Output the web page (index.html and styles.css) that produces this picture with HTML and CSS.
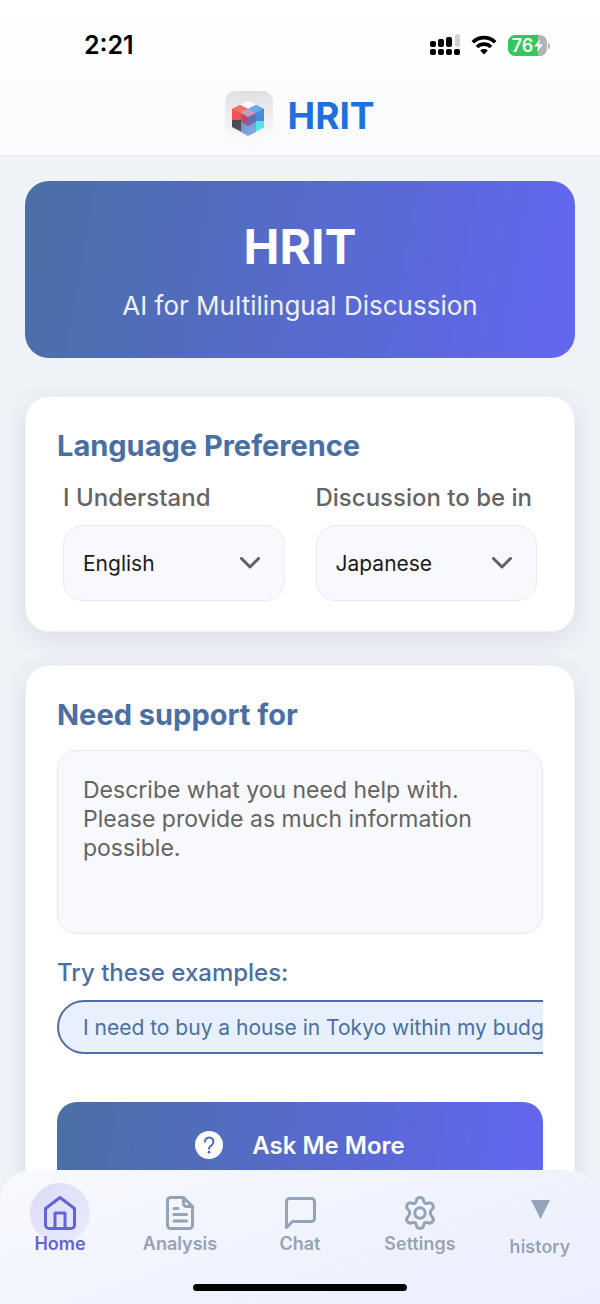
FILE: index.html
```html
<!DOCTYPE html>
<html lang="en">
<head>
<meta charset="utf-8">
<meta name="viewport" content="width=device-width, initial-scale=1">
<title>HRIT</title>
<link rel="stylesheet" href="styles.css">
</head>
<body>
<div class="app">
  <header class="header">
    <div class="status">
      <span class="time">2:21</span>
      <div class="indicators">
        <svg class="signal" width="30" height="22" viewBox="0 0 30 22" aria-hidden="true">
          <rect x="0" y="7" width="6" height="6" rx="2"/>
          <rect x="8" y="5" width="6" height="8" rx="2"/>
          <rect x="16" y="3" width="6" height="10" rx="2"/>
          <rect x="25" y="0" width="5" height="13" rx="2" fill="#d2d2d2"/>
          <rect x="0" y="15" width="6" height="6" rx="2"/>
          <rect x="8" y="15" width="6" height="6" rx="2"/>
          <rect x="16" y="15" width="6" height="6" rx="2"/>
          <rect x="24" y="15" width="6" height="6" rx="2"/>
        </svg>
        <svg class="wifi" width="26" height="20" viewBox="0 0 26 20" aria-hidden="true">
          <path d="M1.800 7.200a16 16 0 0 1 22.400 0M6 12a10 10 0 0 1 14 0" fill="none" stroke="#000" stroke-width="3.600"/>
          <path d="M9.200 15.600a5.600 5.600 0 0 1 7.600 0L13 19.600z"/>
        </svg>
        <div class="battery">
          <span class="level">76</span>
          <svg width="9" height="13" viewBox="0 0 9 13" aria-hidden="true"><path d="M6 0L0 7.500h4L3 13l6-7.500H5z" fill="#fff"/></svg>
        </div>
      </div>
    </div>
    <div class="brand">
      <svg class="logo" width="48" height="48" viewBox="0 0 48 48" aria-hidden="true">
        <defs>
          <linearGradient id="tile" x1="0" y1="0" x2="0" y2="1"><stop offset="0" stop-color="#e0e0e2"/><stop offset="0.600" stop-color="#f0f0f2"/><stop offset="1" stop-color="#fafbfc"/></linearGradient>
          <linearGradient id="base" x1="0" y1="0" x2="1" y2="1"><stop offset="0" stop-color="#6f8fce"/><stop offset="1" stop-color="#86b3ea"/></linearGradient>
        </defs>
        <rect width="48" height="48" rx="11" fill="url(#tile)"/>
        <path d="M5 37l18 8 18-8-6-4H12z" fill="#e4e5e8"/>
        <path d="M15 14l8-4 9 4-9 6z" fill="#fff"/>
        <path d="M7 18l8-4 8 4-6 3v9H7z" fill="#ed5357"/>
        <path d="M7 18l8-4 8 4-7 4z" fill="#f0726f"/>
        <path d="M7 29h10v12l-10-5z" fill="#4b4c53"/>
        <path d="M23 18l8-4 8 4v12H29z" fill="#438bdd"/>
        <path d="M23 18l8-4 8 4-8 4z" fill="#66aae9"/>
        <path d="M30 30h9v6l-9 5z" fill="#58dfe9"/>
        <path d="M16 30l7 4 8-4v11l-8 4-7-4z" fill="url(#base)"/>
        <path d="M16 22l7 3v10l-7-4z" fill="#b84b68"/>
        <path d="M23 25l8-3v9l-8 4z" fill="#6a6db4"/>
        <path d="M16 22l7-4 8 4-8 4z" fill="#c99fb4"/>
      </svg>
      <span class="brand-name">HRIT</span>
    </div>
  </header>

  <main class="content">
    <section class="hero">
      <h1>HRIT</h1>
      <p>AI for Multilingual Discussion</p>
    </section>

    <section class="card">
      <h2>Language Preference</h2>
      <div class="languages">
        <div class="field">
          <label for="understand">I Understand</label>
          <div class="select">
            <select id="understand"><option>English</option><option>Japanese</option></select>
            <svg class="chevron" width="20" height="12" viewBox="0 0 20 12" aria-hidden="true"><path d="M1.500 1.500L10 10l8.500-8.500"/></svg>
          </div>
        </div>
        <div class="field">
          <label for="discussion">Discussion to be in</label>
          <div class="select">
            <select id="discussion"><option>Japanese</option><option>English</option></select>
            <svg class="chevron" width="20" height="12" viewBox="0 0 20 12" aria-hidden="true"><path d="M1.500 1.500L10 10l8.500-8.500"/></svg>
          </div>
        </div>
      </div>
    </section>

    <section class="card">
      <h2><label for="support">Need support for</label></h2>
      <textarea id="support" class="support" placeholder="Describe what you need help with. Please provide as much information possible."></textarea>
      <h3>Try these examples:</h3>
      <div class="examples">
        <button class="chip" type="button">I need to buy a house in Tokyo within my budget</button>
      </div>
      <button class="ask" type="button">
        <svg width="28" height="28" viewBox="0 0 28 28" aria-hidden="true">
          <circle cx="14" cy="14" r="14" fill="#fff"/>
          <path d="M9.800 10.800a4.300 4.300 0 1 1 6.600 3.600c-1.600 1-2.400 1.600-2.400 3.400" fill="none" stroke="#4f6db4" stroke-width="2" stroke-linecap="round"/>
          <circle cx="14" cy="21.200" r="1.400" fill="#4f6db4"/>
        </svg>
        <span>Ask Me More</span>
      </button>
    </section>
  </main>

  <nav class="tabs">
    <div class="tab-row">
      <a class="tab active" href="#home">
        <span class="tab-icon"><svg width="32" height="34" viewBox="0 0 32 34" aria-hidden="true"><path d="M1.500 12.500L16 1.500l14.500 11V29a3.500 3.500 0 0 1-3.500 3.500H5A3.500 3.500 0 0 1 1.500 29zM11 32V17h10v15"/></svg></span>
        <span>Home</span>
      </a>
      <a class="tab" href="#analysis">
        <span class="tab-icon"><svg width="28" height="34" viewBox="0 0 28 34" aria-hidden="true"><path d="M17.500 1.500H4.500a3 3 0 0 0-3 3v25a3 3 0 0 0 3 3h19a3 3 0 0 0 3-3V10.500zM17.500 1.500v6a3 3 0 0 0 3 3h6M8 12.500h4M8 18.500h12.500M8 25h12.500"/></svg></span>
        <span>Analysis</span>
      </a>
      <a class="tab" href="#chat">
        <span class="tab-icon"><svg width="31" height="32" viewBox="0 0 31 32" aria-hidden="true"><path d="M1.500 30.500V4.500a3 3 0 0 1 3-3h22a3 3 0 0 1 3 3v17a3 3 0 0 1-3 3h-19z"/></svg></span>
        <span>Chat</span>
      </a>
      <a class="tab" href="#settings">
        <span class="tab-icon"><svg width="32" height="34" viewBox="0 0 32 34" aria-hidden="true"><path d="M16 1.500c2.200 0 3.500 1.500 3.800 3.600.3 2.200 1.800 3 3.800 2.200 2-.8 4-.6 5.200 1.400 1.100 1.900.5 3.800-1.200 5.200-1.700 1.400-1.700 4.800 0 6.200 1.700 1.400 2.300 3.300 1.200 5.200-1.200 2-3.200 2.200-5.200 1.400-2-.8-3.500 0-3.800 2.200-.3 2.100-1.600 3.600-3.800 3.600s-3.500-1.500-3.800-3.600c-.3-2.200-1.800-3-3.800-2.200-2 .8-4 .6-5.200-1.400-1.100-1.900-.5-3.800 1.200-5.200 1.700-1.400 1.700-4.800 0-6.200C2.700 12.500 2.100 10.600 3.200 8.700c1.200-2 3.200-2.200 5.200-1.400 2 .8 3.500 0 3.800-2.200.3-2.100 1.600-3.600 3.800-3.600z"/><circle cx="16" cy="17" r="5.200"/></svg></span>
        <span>Settings</span>
      </a>
      <a class="tab history" href="#history">
        <span class="tab-icon"><svg width="19" height="19" viewBox="0 0 19 19" aria-hidden="true"><path d="M0 0h19L9.500 19z"/></svg></span>
        <span>history</span>
      </a>
    </div>
    <div class="home-indicator"></div>
  </nav>
</div>
</body>
</html>
```

FILE: styles.css
```css
* { box-sizing: border-box; }

body {
  margin: 0;
  font-family: Inter, "Liberation Sans", sans-serif;
  color: #1c1c1e;
}

h1, h2, h3, p { margin: 0; }

button, select, textarea { font: inherit; margin: 0; }

.app {
  height: 100vh;
  display: flex;
  flex-direction: column;
  background: #eff3f8;
}

.header {
  flex: none;
  background: linear-gradient(#ffffff, #f8fafc);
  border-bottom: 1px solid #e8ecf1;
}

.status {
  display: flex;
  justify-content: space-between;
  align-items: center;
  height: 90px;
  padding: 0 50px 0 84px;
}

.time { font-size: 25px; font-weight: 600; color: #000; }

.indicators { display: flex; align-items: center; gap: 11px; }

.battery {
  position: relative;
  display: flex;
  align-items: center;
  justify-content: center;
  gap: 1px;
  width: 39px;
  height: 21px;
  margin-right: 3px;
  border-radius: 7px;
  background: linear-gradient(90deg, #35c759 76%, #b3b3b5 76%);
}

.battery::after {
  content: "";
  position: absolute;
  right: -3px;
  top: 8px;
  width: 2px;
  height: 6px;
  border-radius: 0 2px 2px 0;
  background: #b3b3b5;
}

.level { font-size: 18px; line-height: 21px; font-weight: 600; color: #fff; }

.brand {
  display: flex;
  justify-content: center;
  align-items: center;
  gap: 14px;
  height: 65px;
  padding-bottom: 15px;
}

.brand-name { font-size: 37px; font-weight: 700; color: #1f6fde; }

.content {
  flex: 1;
  min-height: 0;
  overflow-y: auto;
  scrollbar-width: none;
  padding: 25px 25px 160px;
}

.hero {
  padding: 36px 24px;
  border-radius: 24px;
  background: linear-gradient(100deg, #4a6fa5, #6366f1);
  color: #fff;
  text-align: center;
}

.hero h1 { font-size: 48px; line-height: 60px; font-weight: 700; }

.hero p { margin-top: 12px; font-size: 26px; line-height: 33px; color: #eef1fc; }

.card {
  margin-top: 33px;
  padding: 30px 31px;
  border: 1px solid #f0f1f5;
  border-radius: 24px;
  background: #fff;
  box-shadow: 0 6px 24px rgba(60, 70, 100, 0.12);
}

.hero + .card { margin-top: 38px; }

.card h2 { font-size: 29px; line-height: 38px; font-weight: 700; color: #4a6fa5; }

.languages {
  display: grid;
  grid-template-columns: 1fr 1fr;
  gap: 31px;
  padding: 0 6px;
}

.field label {
  display: block;
  padding: 17px 0 11px;
  font-size: 24px;
  line-height: 32px;
  font-weight: 500;
  color: #646464;
  white-space: nowrap;
}

.select { position: relative; }

.select select {
  width: 100%;
  height: 76px;
  padding: 0 50px 0 19px;
  border: 1px solid #e9eaef;
  border-radius: 20px;
  background: #f8f9fc;
  font-size: 21px;
  color: #1c1c1e;
  appearance: none;
}

.chevron {
  position: absolute;
  right: 25px;
  top: 32px;
  fill: none;
  stroke: #606062;
  stroke-width: 3;
  stroke-linecap: round;
  stroke-linejoin: round;
  pointer-events: none;
}

.support {
  display: block;
  width: 100%;
  height: 184px;
  margin-top: 16px;
  padding: 25px;
  border: 1px solid #e6e7ee;
  border-radius: 20px;
  background: #f8f9fc;
  font-size: 23px;
  line-height: 29px;
  resize: none;
}

.support::placeholder { color: #646464; opacity: 1; }

.card h3 {
  margin-top: 23px;
  font-size: 24px;
  line-height: 32px;
  font-weight: 500;
  color: #4a6fa5;
}

.examples { margin-top: 11px; overflow: hidden; display: flex; }

.chip {
  flex: none;
  height: 54px;
  padding: 0 24px;
  border: 2px solid #4f6ca8;
  border-radius: 27px;
  background: #e8f0fd;
  font-size: 21px;
  color: #4a6fa5;
  white-space: nowrap;
}

.ask {
  display: flex;
  align-items: center;
  justify-content: center;
  gap: 29px;
  width: 100%;
  height: 86px;
  margin-top: 48px;
  border: 0;
  border-radius: 20px;
  background: linear-gradient(100deg, #4a6fa5, #6366f1);
  font-size: 24px;
  font-weight: 600;
  color: #fff;
}

.tabs {
  position: fixed;
  left: 0;
  right: 0;
  bottom: 0;
  padding: 13px 0;
  border-radius: 32px 32px 0 0;
  background: linear-gradient(160deg, #f8fafd, #f2f4fe 40%, #ebeffd);
}

.tab-row { display: grid; grid-template-columns: repeat(5, 1fr); }

.tab {
  display: flex;
  flex-direction: column;
  align-items: center;
  height: 101px;
  font-size: 18px;
  line-height: 24px;
  font-weight: 600;
  color: #97a3b5;
  text-decoration: none;
}

.tab-icon {
  display: flex;
  align-items: center;
  justify-content: center;
  width: 60px;
  height: 60px;
  margin-bottom: -11px;
  border-radius: 50%;
}

.tab svg {
  fill: none;
  stroke: #94a3b8;
  stroke-width: 3;
  stroke-linecap: round;
  stroke-linejoin: round;
}

.active { color: #6464d8; }

.active .tab-icon { background: linear-gradient(135deg, #dddcf8, #e9eafc); }

.active svg { stroke: #6464d8; }

.history .tab-icon { height: 52px; margin-bottom: 0; }

.history svg { fill: #94a3b8; stroke: none; }

.home-indicator {
  width: 214px;
  height: 7px;
  margin: 0 auto;
  border-radius: 4px;
  background: #000;
}
```
